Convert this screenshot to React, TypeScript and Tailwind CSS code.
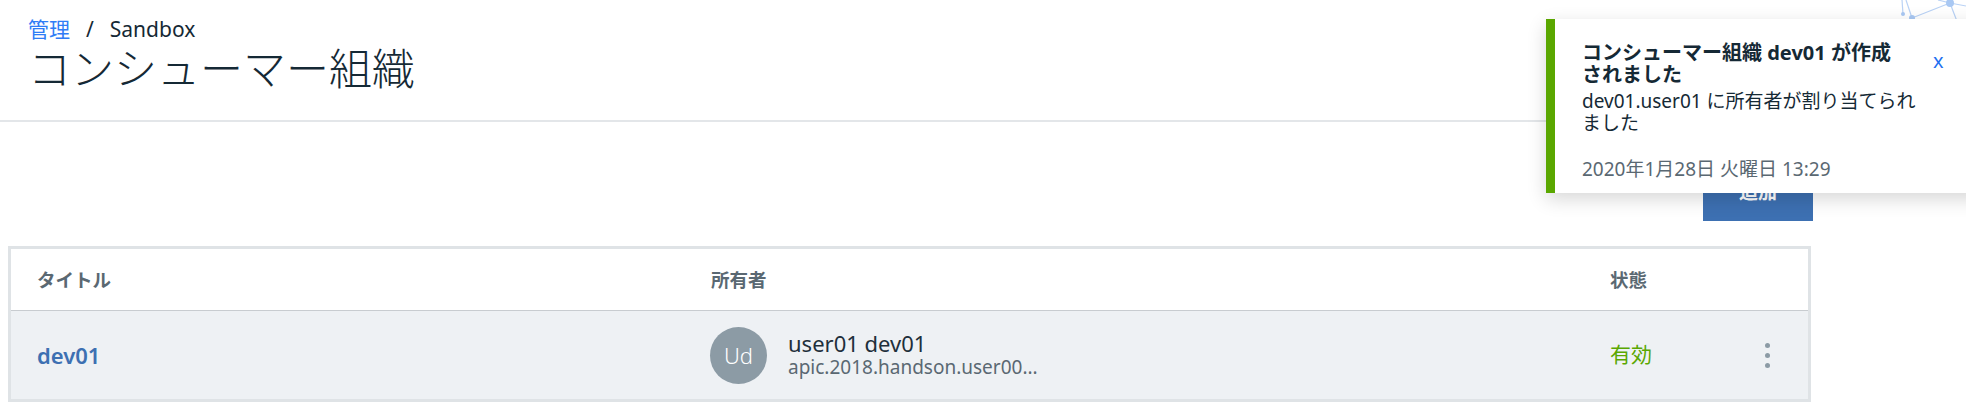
import React from "react";

const sans = "font-['Noto_Sans','Noto_Sans_CJK_JP',sans-serif]";

function NetworkDecor() {
  return (
    <svg className="absolute top-0 right-0" width="80" height="30" viewBox="0 0 80 30">
      <g stroke="#b9d2f5" strokeWidth="1.2" fill="none">
        <line x1="16" y1="0" x2="17" y2="14" />
        <line x1="20" y1="0" x2="26" y2="18" />
        <line x1="26" y1="18" x2="64" y2="3" />
        <line x1="64" y1="3" x2="80" y2="6" />
        <line x1="64" y1="3" x2="72" y2="24" />
        <line x1="52" y1="0" x2="64" y2="3" />
      </g>
      <g fill="#a9c8f3">
        <circle cx="17" cy="14" r="2" />
        <circle cx="26" cy="18" r="3" />
        <circle cx="64" cy="3" r="4" />
      </g>
    </svg>
  );
}

function KebabIcon() {
  return (
    <div className="flex flex-col items-center gap-[5px]">
      <span className="w-[5px] h-[5px] rounded-full bg-[#8c9ba5]" />
      <span className="w-[5px] h-[5px] rounded-full bg-[#8c9ba5]" />
      <span className="w-[5px] h-[5px] rounded-full bg-[#8c9ba5]" />
    </div>
  );
}

function Toast() {
  return (
    <div className="absolute top-[19px] left-[1546px] w-[440px] h-[174px] bg-white border-l-[9px] border-[#5aa700] shadow-[0_6px_18px_rgba(0,0,0,0.16)]">
      <div className="pl-[27px] pt-[23px] pr-[60px]">
        <p className="text-[20px] leading-[22px] font-bold text-[#152935]">
          コンシューマー組織 dev01 が作成
          <br />
          されました
        </p>
        <p className="mt-[4px] text-[19px] leading-[22px] text-[#152935]">
          dev01.user01 に所有者が割り当てられ
          <br />
          ました
        </p>
        <p className="mt-[24px] text-[19px] leading-[22px] text-[#5a6872]">2020年1月28日 火曜日 13:29</p>
      </div>
      <button className="absolute top-[30px] left-[378px] text-[20px] leading-[24px] text-[#1f70f0]">x</button>
    </div>
  );
}

export default function App() {
  return (
    <div className={`relative w-[1966px] h-[402px] overflow-hidden bg-white ${sans}`}>
      <NetworkDecor />

      {/* Page header */}
      <header className="h-[122px] border-b-2 border-[#e3e6e9] pl-[28px] pt-[16px]">
        <nav className="flex items-center text-[21px] leading-[26px]">
          <a className="text-[#2f7cf6]">管理</a>
          <span className="mx-[16px] text-[#152935]">/</span>
          <span className="text-[#152935]">Sandbox</span>
        </nav>
        <h1 className="mt-[1px] text-[43px] leading-[52px] font-light text-[#152935]">コンシューマー組織</h1>
      </header>

      <div className="ml-[8px] w-[1805px]">
        {/* Toolbar */}
        <div className="flex justify-end pt-[41px]">
          <button className="w-[110px] h-[58px] bg-[#3d70b2] text-white text-[19px] font-semibold">追加</button>
        </div>

        {/* Table */}
        <div className="mt-[25px] w-[1803px] border-[3px] border-[#dfe3e6] bg-white">
          <div className="grid grid-cols-[674px_899px_1fr] items-center h-[62px] pl-[26px] border-b border-[#c8ccd0] text-[18.5px] font-semibold text-[#5a6872]">
            <span>タイトル</span>
            <span>所有者</span>
            <span>状態</span>
          </div>
          <div className="grid grid-cols-[674px_899px_1fr] items-center h-[89px] pl-[26px] bg-[#eef1f4] border-b border-[#dfe3e6]">
            <span className="text-[22px] font-semibold text-[#3d70b2]">dev01</span>
            <div className="flex items-center gap-[21px] -ml-[1px]">
              <div className="w-[57px] h-[57px] rounded-full bg-[#8c9ba5] flex items-center justify-center text-white text-[22px] font-light">
                Ud
              </div>
              <div className="flex flex-col">
                <span className="text-[22px] leading-[25px] text-[#1e2f3b]">user01 dev01</span>
                <span className="text-[19px] leading-[23px] text-[#5a6872]">apic.2018.handson.user00...</span>
              </div>
            </div>
            <div className="flex items-center pr-[38px]">
              <span className="text-[21px] text-[#5aa700]">有効</span>
              <div className="ml-auto">
                <KebabIcon />
              </div>
            </div>
          </div>
        </div>
      </div>

      <Toast />
    </div>
  );
}
